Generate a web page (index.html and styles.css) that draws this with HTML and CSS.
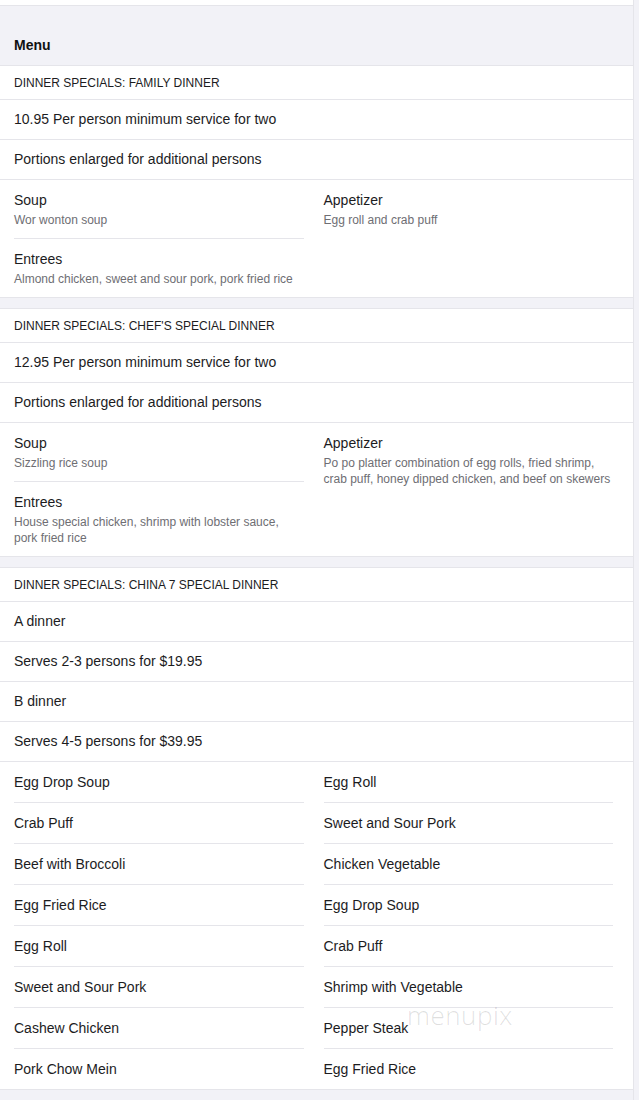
FILE: index.html
```html
<!DOCTYPE html>
<html>
<head>
<meta charset="utf-8">
<link rel="stylesheet" href="styles.css">
</head>
<body>
<div class="page">
  <div class="topbar"></div>
  <div class="menu-title">Menu</div>

  <section class="card">
    <div class="sec-head">DINNER SPECIALS: FAMILY DINNER</div>
    <div class="row">10.95 Per person minimum service for two</div>
    <div class="row">Portions enlarged for additional persons</div>
    <div class="grid">
      <div class="col">
        <div class="item"><div class="name">Soup</div><div class="desc">Wor wonton soup</div></div>
        <div class="item"><div class="name">Entrees</div><div class="desc">Almond chicken, sweet and sour pork, pork fried rice</div></div>
      </div>
      <div class="col">
        <div class="item"><div class="name">Appetizer</div><div class="desc">Egg roll and crab puff</div></div>
      </div>
    </div>
  </section>

  <section class="card">
    <div class="sec-head">DINNER SPECIALS: CHEF'S SPECIAL DINNER</div>
    <div class="row">12.95 Per person minimum service for two</div>
    <div class="row">Portions enlarged for additional persons</div>
    <div class="grid">
      <div class="col">
        <div class="item"><div class="name">Soup</div><div class="desc">Sizzling rice soup</div></div>
        <div class="item"><div class="name">Entrees</div><div class="desc">House special chicken, shrimp with lobster sauce, pork fried rice</div></div>
      </div>
      <div class="col">
        <div class="item"><div class="name">Appetizer</div><div class="desc">Po po platter combination of egg rolls, fried shrimp, crab puff, honey dipped chicken, and beef on skewers</div></div>
      </div>
    </div>
  </section>

  <section class="card last">
    <div class="sec-head">DINNER SPECIALS: CHINA 7 SPECIAL DINNER</div>
    <div class="row">A dinner</div>
    <div class="row">Serves 2-3 persons for $19.95</div>
    <div class="row">B dinner</div>
    <div class="row">Serves 4-5 persons for $39.95</div>
    <div class="grid">
      <div class="col">
        <div class="item"><div class="name">Egg Drop Soup</div></div>
        <div class="item"><div class="name">Crab Puff</div></div>
        <div class="item"><div class="name">Beef with Broccoli</div></div>
        <div class="item"><div class="name">Egg Fried Rice</div></div>
        <div class="item"><div class="name">Egg Roll</div></div>
        <div class="item"><div class="name">Sweet and Sour Pork</div></div>
        <div class="item"><div class="name">Cashew Chicken</div></div>
        <div class="item"><div class="name">Pork Chow Mein</div></div>
      </div>
      <div class="col">
        <div class="item"><div class="name">Egg Roll</div></div>
        <div class="item"><div class="name">Sweet and Sour Pork</div></div>
        <div class="item"><div class="name">Chicken Vegetable</div></div>
        <div class="item"><div class="name">Egg Drop Soup</div></div>
        <div class="item"><div class="name">Crab Puff</div></div>
        <div class="item"><div class="name">Shrimp with Vegetable</div></div>
        <div class="item"><div class="name">Pepper Steak</div></div>
        <div class="item"><div class="name">Egg Fried Rice</div></div>
      </div>
    </div>
    <div class="watermark">menupix</div>
  </section>
</div>
</body>
</html>
```

FILE: styles.css
```css
* { box-sizing: border-box; }
html, body { margin: 0; padding: 0; }
body {
  background: #f2f2f7;
  font-family: "Liberation Sans", Arial, sans-serif;
  color: #1c1c1e;
}
.page {
  width: 634px;
  border-right: 1px solid #e5e5ea;
  min-height: 1100px;
}
.topbar {
  height: 6px;
  background: #fff;
  border-bottom: 1px solid #e5e5ea;
}
.menu-title {
  height: 59px;
  display: flex;
  align-items: flex-end;
  padding: 0 14px 11px;
  font-size: 14px;
  line-height: 17px;
  font-weight: bold;
  color: #111;
}
.card {
  position: relative;
  background: #fff;
  border-top: 1px solid #e5e5ea;
  border-bottom: 1px solid #e5e5ea;
  margin-bottom: 10px;
}
.sec-head {
  height: 34px;
  display: flex;
  align-items: center;
  padding: 0 14px;
  font-size: 12px;
  border-bottom: 1px solid #e5e5ea;
  color: #1c1c1e;
}
.row {
  height: 40px;
  display: flex;
  align-items: center;
  padding: 0 14px 1px;
  font-size: 14px;
  border-bottom: 1px solid #e5e5ea;
  color: #1c1c1e;
}
.grid {
  display: flex;
  padding-left: 14px;
}
.col {
  flex: 1 1 0;
  padding-right: 20px;
}
.item {
  padding: 12px 0 11px;
  border-bottom: 1px solid #e5e5ea;
}
.item:last-child { border-bottom: none; }
.name {
  font-size: 14px;
  line-height: 17px;
  color: #1c1c1e;
}
.desc {
  font-size: 12px;
  line-height: 16px;
  margin-top: 3px;
  margin-bottom: -1px;
  color: #6e6e73;
}
.watermark {
  position: absolute;
  left: 407px;
  bottom: 56px;
  font-family: "Open Sans", sans-serif;
  font-weight: 300;
  font-size: 26px;
  letter-spacing: 0.5px;
  color: rgba(0, 0, 0, 0.13);
  pointer-events: none;
}
```
